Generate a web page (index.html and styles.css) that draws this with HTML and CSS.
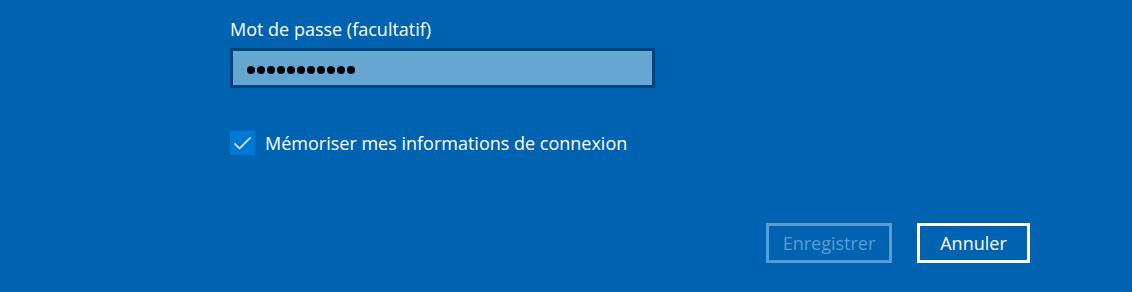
FILE: index.html
```html
<!DOCTYPE html>
<html lang="fr">
<head>
<meta charset="utf-8">
<title>Mot de passe</title>
<link rel="stylesheet" href="styles.css">
</head>
<body>
<div class="form">
  <label class="label" for="pwd">Mot de passe (facultatif)</label>
  <div class="input" id="pwd" role="textbox" aria-label="Mot de passe">
    <span class="dot"></span><span class="dot"></span><span class="dot"></span><span class="dot"></span><span class="dot"></span><span class="dot"></span><span class="dot"></span><span class="dot"></span><span class="dot"></span><span class="dot"></span><span class="dot"></span>
  </div>
  <div class="check-row">
    <span class="checkbox">
      <svg width="25" height="24" viewBox="0 0 25 24" aria-hidden="true">
        <path d="M4.5 12.5 L9.5 17.5 L20.5 6.5" fill="none" stroke="#ffffff" stroke-width="1.5"/>
      </svg>
    </span>
    <span class="check-label">Mémoriser mes informations de connexion</span>
  </div>
  <div class="actions">
    <button class="btn btn-disabled" type="button">Enregistrer</button>
    <button class="btn btn-primary" type="button">Annuler</button>
  </div>
</div>
</body>
</html>
```
FILE: styles.css
```css
html, body {
  margin: 0;
  padding: 0;
  background: #0063b1;
  height: 100%;
}
body {
  font-family: "Open Sans", "Noto Sans", "Liberation Sans", sans-serif;
  color: #ffffff;
}
.form {
  width: 800px;
  margin-left: 230px;
  padding-top: 17px;
  display: flex;
  flex-direction: column;
}
.label {
  font-size: 18px;
  line-height: 24px;
  height: 24px;
  display: block;
}
.input {
  margin-top: 7px;
  width: 425px;
  height: 40px;
  box-sizing: border-box;
  border: 3px solid #00457e;
  background: #66a6d3;
  display: flex;
  align-items: center;
  gap: 2px;
  padding-left: 14px;
  padding-top: 3px;
}
.dot {
  width: 8px;
  height: 8px;
  border-radius: 50%;
  background: #000000;
  display: block;
}
.check-row {
  margin-top: 43px;
  display: flex;
  align-items: center;
  gap: 10px;
  height: 24px;
}
.checkbox {
  width: 25px;
  height: 24px;
  background: #0078d7;
  display: block;
}
.checkbox svg { display: block; }
.check-label {
  font-size: 18px;
  line-height: 24px;
}
.actions {
  margin-top: 68px;
  display: flex;
  justify-content: flex-end;
  gap: 25px;
}
.btn {
  height: 40px;
  box-sizing: border-box;
  background: transparent;
  font-family: inherit;
  font-size: 18px;
  padding: 0;
  margin: 0;
}
.btn-disabled {
  width: 126px;
  border: 3px solid #5b9cd2;
  color: #5b9cd2;
}
.btn-primary {
  width: 113px;
  border: 3px solid #ffffff;
  color: #ffffff;
}
```
